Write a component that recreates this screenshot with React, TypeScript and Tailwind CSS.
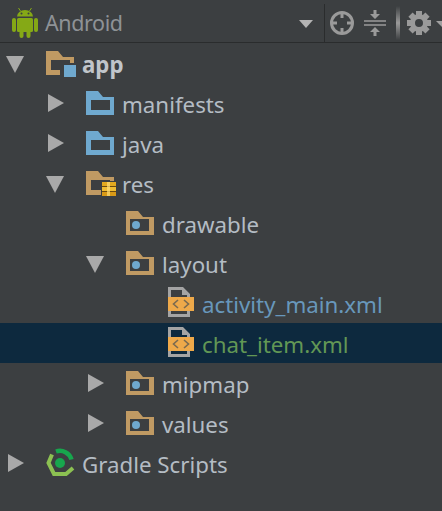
import React from "react";

const Arrow = ({ open }: { open?: boolean }) => (
  <svg width="40" height="40" viewBox="0 0 40 40" className="block shrink-0">
    {open ? <polygon points="6,13 24,13 15,30" fill="#a9a9a9" /> : <polygon points="8,11 24,20 8,29" fill="#a9a9a9" />}
  </svg>
);

const FOLDER = "M6 8H18L23 14H34V32H6ZM11 17V27H30V17Z";

const Folder = ({ color, children }: { color: string; children?: React.ReactNode }) => (
  <svg width="40" height="40" viewBox="0 0 40 40" className="block shrink-0">
    <path fillRule="evenodd" d={FOLDER} fill={color} />
    {children}
  </svg>
);

const AppIcon = () => (
  <Folder color="#c09a63">
    <rect x="20" y="20" width="18" height="16" fill="#3c3f41" />
    <rect x="24" y="22" width="12" height="12" fill="#6fa9cf" />
  </Folder>
);

const ResIcon = () => (
  <Folder color="#c09a63">
    <rect x="21" y="18" width="16" height="17" fill="#3c3f41" />
    <rect x="22" y="19" width="14" height="4" fill="#e3a91f" />
    <rect x="22" y="24" width="14" height="4" fill="#f0bd33" />
    <rect x="22" y="29" width="14" height="4" fill="#d99a17" />
    <rect x="22" y="23" width="14" height="1" fill="#6b4a10" />
    <rect x="22" y="28" width="14" height="1" fill="#6b4a10" />
    <rect x="27" y="19" width="3" height="14" fill="#ffe07a" opacity="0.7" />
  </Folder>
);

const DotFolder = () => (
  <svg width="40" height="40" viewBox="0 0 40 40" className="block shrink-0">
    <path fillRule="evenodd" d="M6 8H18L23 14H34V32H6ZM10 16V28H29V16Z" fill="#c09a63" />
    <circle cx="16" cy="22" r="4" fill="#6fa9cf" />
  </svg>
);

const XmlFile = () => (
  <svg width="40" height="40" viewBox="0 0 40 40" className="block shrink-0">
    <path fillRule="evenodd" d="M8 4H23L30 11V34H8ZM11 7V31H27V12H22V7Z" fill="#a4a4a4" />
    <rect x="8" y="14" width="26" height="14" fill="#eea94a" />
    <path d="M18 17L13.5 21L18 25M24 17L28.5 21L24 25" stroke="#7a6a50" strokeWidth="1.6" fill="none" />
  </svg>
);

const Gradle = () => (
  <svg width="40" height="40" viewBox="0 0 40 40" className="block shrink-0">
    <path d="M16 8.5A12 12 0 0 1 31.5 16.5" stroke="#17a64d" strokeWidth="4.5" fill="none" />
    <path d="M12 11.5L8.5 20L14 31H26L33 25" stroke="#8cc152" strokeWidth="4" fill="none" />
    <circle cx="20" cy="20" r="5" fill="#17a64d" />
  </svg>
);

const Row = ({
  depth,
  arrow,
  icon,
  label,
  cls = "text-[#b4bcc4]",
  selected,
}: {
  depth: number;
  arrow?: "open" | "closed";
  icon: React.ReactNode;
  label: string;
  cls?: string;
  selected?: boolean;
}) => (
  <div className={`flex h-10 items-center ${selected ? "bg-[#0d293e]" : ""}`}>
    <div className="shrink-0" style={{ width: depth * 40 }} />
    {arrow ? <Arrow open={arrow === "open"} /> : <div className="w-10 shrink-0" />}
    {icon}
    <span className={`mt-1 pl-[2px] whitespace-nowrap text-[22.3px] leading-9 ${cls}`}>{label}</span>
  </div>
);

const teeth = [0, 45, 90, 135, 180, 225, 270, 315];

export default function App() {
  return (
    <div className="h-[511px] w-[442px] overflow-hidden bg-[#3c3f41] font-['Noto_Sans',sans-serif]">
      <div className="flex h-[43px] items-center border-b border-[#2a2c2d] bg-[#3c3f41]">
        <svg width="44" height="42" viewBox="0 0 44 42" className="shrink-0">
          <g fill="#85a916">
            <path d="M17 16.5A8 6.5 0 0 1 33 16.5Z" />
            <rect x="17" y="18" width="16" height="14" rx="1.5" />
            <rect x="12" y="18" width="4" height="14" rx="2" />
            <rect x="34" y="18" width="4" height="14" rx="2" />
            <rect x="19.5" y="30" width="4" height="8" rx="2" />
            <rect x="26.5" y="30" width="4" height="8" rx="2" />
          </g>
          <path d="M20.5 11L18.5 8M29.5 11L31.5 8" stroke="#85a916" strokeWidth="1" />
          <circle cx="21.5" cy="13.5" r="1" fill="#3c3f41" />
          <circle cx="28.5" cy="13.5" r="1" fill="#3c3f41" />
        </svg>
        <span className="ml-px mt-[3px] whitespace-nowrap text-[21.5px] leading-none tracking-[-0.4px] text-[#8e9296]">Android</span>
        <div className="flex-1" />
        <svg width="14" height="8" viewBox="0 0 14 8" className="mr-[11px] mt-[6px] shrink-0">
          <polygon points="0,0 14,0 7,8" fill="#b4b4b4" />
        </svg>
        <div className="mt-1 h-[38px] w-px shrink-0 bg-[#2a2c2d]" />
        <svg width="117" height="42" viewBox="0 0 117 42" className="shrink-0">
          <defs>
            <linearGradient id="bar" x1="0" y1="0" x2="0" y2="1">
              <stop offset="0" stopColor="#3c3f41" />
              <stop offset="0.5" stopColor="#9a9a9a" />
              <stop offset="1" stopColor="#3c3f41" />
            </linearGradient>
          </defs>
          <circle cx="17" cy="23" r="10.5" stroke="#9a9a9a" strokeWidth="3" fill="none" />
          <path d="M17 12V18M17 28V34M6 23H12M22 23H28" stroke="#9a9a9a" strokeWidth="3" />
          <path d="M39 21H61M39 25H61" stroke="#9a9a9a" strokeWidth="1.5" />
          <path d="M50 19L45 14H48.5V10H51.5V14H55ZM50 27L45 32H48.5V36H51.5V32H55Z" fill="#9a9a9a" />
          <rect x="71" y="6" width="4" height="34" fill="url(#bar)" />
          <g fill="#9a9a9a">
            {teeth.map((a) => (
              <rect key={a} x="91" y="11" width="6" height="6" transform={`rotate(${a} 94 23)`} />
            ))}
          </g>
          <circle cx="94" cy="23" r="6.5" stroke="#9a9a9a" strokeWidth="5" fill="none" />
          <polygon points="111,21 117,21 117,27" fill="#a0a0a0" />
        </svg>
      </div>
      <div>
        <Row depth={0} arrow="open" icon={<AppIcon />} label="app" cls="font-bold text-[#c0c5ca]" />
        <Row depth={1} arrow="closed" icon={<Folder color="#6fa9cf" />} label="manifests" />
        <Row depth={1} arrow="closed" icon={<Folder color="#6fa9cf" />} label="java" />
        <Row depth={1} arrow="open" icon={<ResIcon />} label="res" />
        <Row depth={2} icon={<DotFolder />} label="drawable" />
        <Row depth={2} arrow="open" icon={<DotFolder />} label="layout" />
        <Row depth={3} icon={<XmlFile />} label="activity_main.xml" cls="text-[#6897bb]" />
        <Row depth={3} icon={<XmlFile />} label="chat_item.xml" cls="text-[#629755]" selected />
        <Row depth={2} arrow="closed" icon={<DotFolder />} label="mipmap" />
        <Row depth={2} arrow="closed" icon={<DotFolder />} label="values" />
        <Row depth={0} arrow="closed" icon={<Gradle />} label="Gradle Scripts" />
      </div>
    </div>
  );
}
